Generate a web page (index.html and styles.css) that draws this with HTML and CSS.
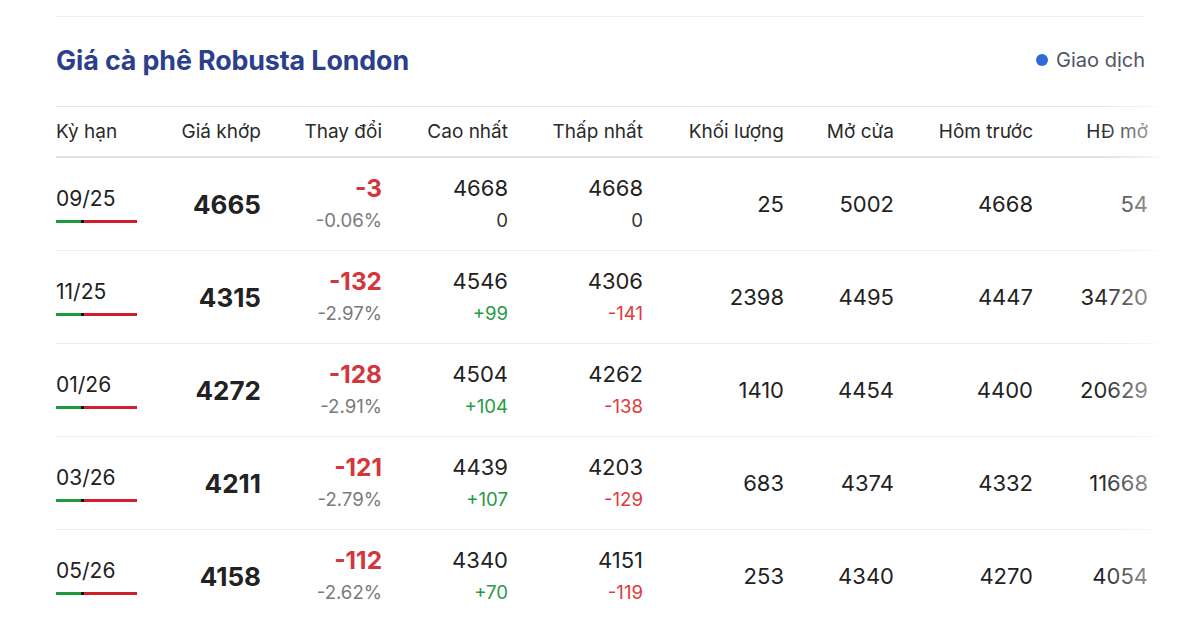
FILE: index.html
```html
<!DOCTYPE html>
<html lang="vi">
<head>
<meta charset="utf-8">
<title>Giá cà phê Robusta London</title>
<link rel="stylesheet" href="styles.css">
</head>
<body>
<div class="page">
  <div class="topline"></div>
  <div class="head">
    <h2 class="title">Giá cà phê Robusta London</h2>
    <div class="status"><span class="dot"></span>Giao dịch</div>
  </div>
  <div class="table-wrap">
    <div class="row header">
      <div class="cell left">Kỳ hạn</div>
      <div class="cell">Giá khớp</div>
      <div class="cell">Thay đổi</div>
      <div class="cell">Cao nhất</div>
      <div class="cell">Thấp nhất</div>
      <div class="cell">Khối lượng</div>
      <div class="cell">Mở cửa</div>
      <div class="cell">Hôm trước</div>
      <div class="cell">HĐ mở</div>
    </div>

    <div class="row">
      <div class="cell left term"><span class="term-name">09/25</span><span class="bar"><span class="g"></span><span class="k"></span><span class="r"></span></span></div>
      <div class="cell price">4665</div>
      <div class="cell two"><span class="chg">-3</span><span class="pct">-0.06%</span></div>
      <div class="cell two"><span class="v">4668</span><span class="sub">0</span></div>
      <div class="cell two"><span class="v">4668</span><span class="sub">0</span></div>
      <div class="cell">25</div>
      <div class="cell">5002</div>
      <div class="cell">4668</div>
      <div class="cell">54</div>
    </div>

    <div class="row">
      <div class="cell left term"><span class="term-name">11/25</span><span class="bar"><span class="g"></span><span class="k"></span><span class="r"></span></span></div>
      <div class="cell price">4315</div>
      <div class="cell two"><span class="chg">-132</span><span class="pct">-2.97%</span></div>
      <div class="cell two"><span class="v">4546</span><span class="sub up">+99</span></div>
      <div class="cell two"><span class="v">4306</span><span class="sub down">-141</span></div>
      <div class="cell">2398</div>
      <div class="cell">4495</div>
      <div class="cell">4447</div>
      <div class="cell">34720</div>
    </div>

    <div class="row">
      <div class="cell left term"><span class="term-name">01/26</span><span class="bar"><span class="g"></span><span class="k"></span><span class="r"></span></span></div>
      <div class="cell price">4272</div>
      <div class="cell two"><span class="chg">-128</span><span class="pct">-2.91%</span></div>
      <div class="cell two"><span class="v">4504</span><span class="sub up">+104</span></div>
      <div class="cell two"><span class="v">4262</span><span class="sub down">-138</span></div>
      <div class="cell">1410</div>
      <div class="cell">4454</div>
      <div class="cell">4400</div>
      <div class="cell">20629</div>
    </div>

    <div class="row">
      <div class="cell left term"><span class="term-name">03/26</span><span class="bar"><span class="g"></span><span class="k"></span><span class="r"></span></span></div>
      <div class="cell price">4211</div>
      <div class="cell two"><span class="chg">-121</span><span class="pct">-2.79%</span></div>
      <div class="cell two"><span class="v">4439</span><span class="sub up">+107</span></div>
      <div class="cell two"><span class="v">4203</span><span class="sub down">-129</span></div>
      <div class="cell">683</div>
      <div class="cell">4374</div>
      <div class="cell">4332</div>
      <div class="cell">11668</div>
    </div>

    <div class="row">
      <div class="cell left term"><span class="term-name">05/26</span><span class="bar"><span class="g"></span><span class="k"></span><span class="r"></span></span></div>
      <div class="cell price">4158</div>
      <div class="cell two"><span class="chg">-112</span><span class="pct">-2.62%</span></div>
      <div class="cell two"><span class="v">4340</span><span class="sub up">+70</span></div>
      <div class="cell two"><span class="v">4151</span><span class="sub down">-119</span></div>
      <div class="cell">253</div>
      <div class="cell">4340</div>
      <div class="cell">4270</div>
      <div class="cell">4054</div>
    </div>

    <div class="fade"></div>
  </div>
</div>
</body>
</html>
```

FILE: styles.css
```css
* { box-sizing: border-box; }
html, body {
  margin: 0;
  padding: 0;
  background: #ffffff;
}
body {
  font-family: Inter, "Noto Sans", "Liberation Sans", sans-serif;
  color: #222;
}
.page {
  padding: 16px 0 0 56px;
  width: 1200px;
  overflow: hidden;
}
.topline {
  width: 1089px;
  border-top: 1px solid #eceef1;
}
.head {
  width: 1089px;
  height: 89px;
  display: flex;
  align-items: center;
  justify-content: space-between;
  padding-bottom: 4px;
}
.title {
  margin: 0;
  font-size: 26.8px;
  font-weight: 700;
  color: #2c3f8c;
  letter-spacing: -0.1px;
}
.status {
  display: flex;
  align-items: center;
  gap: 8px;
  font-size: 20px;
  color: #4d5566;
}
.dot {
  width: 12px;
  height: 12px;
  border-radius: 50%;
  background: #2f6ad9;
}
.table-wrap {
  position: relative;
  width: 1107px;
  overflow: hidden;
}
.row {
  display: grid;
  grid-template-columns: 94px 111px 121px 126px 135px 141px 110px 139px 115px;
  height: 93px;
  border-bottom: 1px solid #ececec;
  align-items: center;
  font-size: 22px;
  color: #222;
}
.row.header {
  height: 52px;
  border-top: 1px solid #e6e6e6;
  border-bottom: 2px solid #e2e2e2;
  font-size: 19px;
  color: #2a2a2a;
}
.cell {
  text-align: right;
  white-space: nowrap;
}
.cell.left { text-align: left; }
.term {
  display: flex;
  flex-direction: column;
  align-items: flex-start;
}
.term-name {
  line-height: 28px;
  font-size: 21px;
  color: #222;
}
.bar {
  display: flex;
  margin-top: 7px;
  width: 81px;
  height: 3px;
}
.bar .g { width: 25px; background: #1f9a3c; }
.bar .k { width: 3px; background: #111; }
.bar .r { flex: 1; background: #d21f2d; }
.price {
  font-size: 26px;
  font-weight: 700;
  color: #222;
}
.two {
  display: flex;
  flex-direction: column;
  align-items: flex-end;
}
.two > span { line-height: 32px; }
.chg {
  font-size: 24.4px;
  font-weight: 700;
  color: #d3373c;
}
.pct {
  font-size: 18.6px;
  color: #7a7a7a;
}
.v {
  font-size: 22px;
  color: #222;
}
.sub {
  font-size: 18.6px;
  color: #333;
}
.sub.up { color: #279a45; }
.sub.down { color: #e03b3b; }
.fade {
  position: absolute;
  top: 0;
  right: 0;
  bottom: 0;
  width: 64px;
  background: linear-gradient(to right, rgba(255,255,255,0), rgba(255,255,255,0.5) 75%, #ffffff);
  pointer-events: none;
}
```
